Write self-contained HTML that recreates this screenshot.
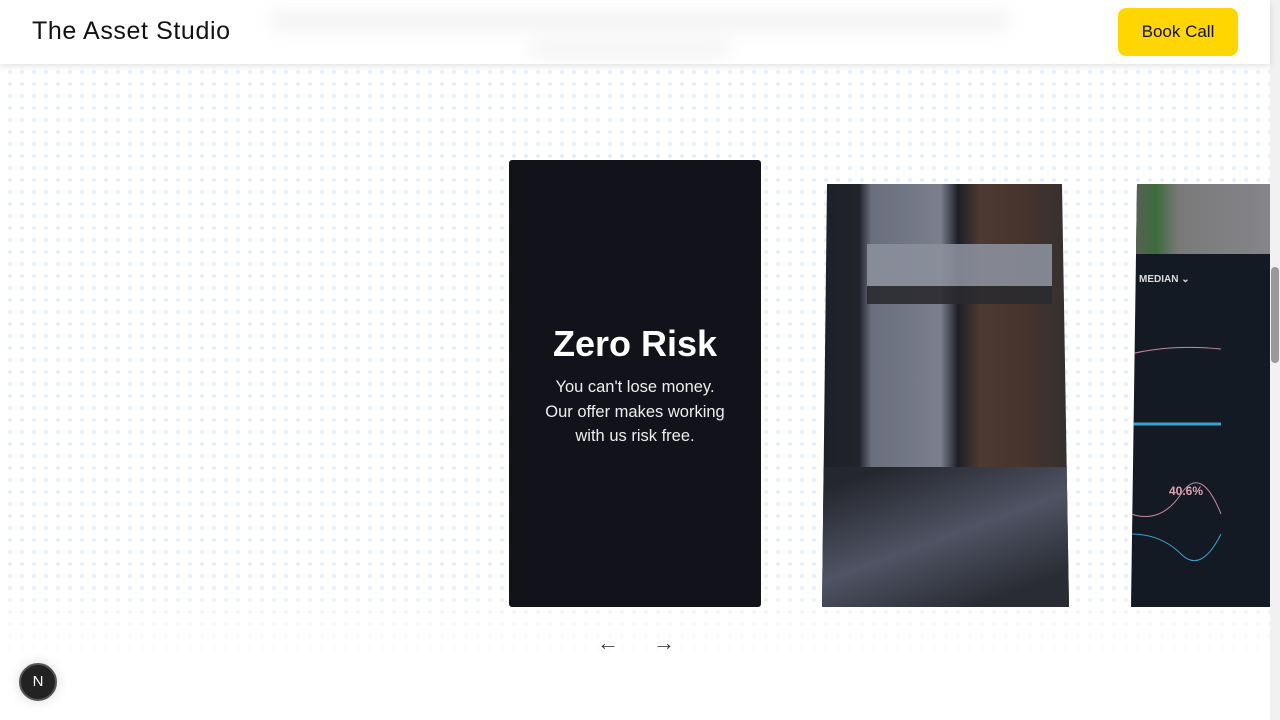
<!DOCTYPE html>
<html><head><meta charset="utf-8"><style>
*{margin:0;padding:0;box-sizing:border-box}
body{width:1280px;height:720px;overflow:hidden;background:#fff;font-family:"Liberation Sans",sans-serif;position:relative}
.dots{position:absolute;left:0;top:64px;width:1270px;height:600px;background-image:radial-gradient(circle,rgba(200,218,245,.45) 1.8px,transparent 2.4px);background-size:12px 12px;background-position:4px 2px;-webkit-mask-image:linear-gradient(#000 85%,transparent);mask-image:linear-gradient(#000 85%,transparent)}
.nav{position:absolute;left:0;top:0;width:1270px;height:64px;background:#fff;box-shadow:0 2px 6px rgba(0,0,0,.12);z-index:5}
.logo{position:absolute;left:32px;top:17px;font-size:25px;color:#111;letter-spacing:.6px}
.btn{position:absolute;left:1118px;top:8px;width:120px;height:48px;background:#ffd600;border-radius:8px;font-size:17px;color:#111;text-align:center;line-height:48px}
.blur{position:absolute;background:#ddd;filter:blur(8px);opacity:.3;border-radius:6px}
.card1{position:absolute;left:509px;top:160px;width:252px;height:447px;background:#11121a;border-radius:3px;color:#fff;text-align:center}
.card1 h2{margin-top:163px;font-size:36px;font-weight:bold}
.card1 p{margin-top:10px;font-size:16.5px;line-height:24.5px;color:#eee}
.c2{position:absolute;left:822px;top:184px;width:247px;height:423px;clip-path:polygon(5px 0,240px 0,247px 423px,0 423px);background:linear-gradient(90deg,#1e2028 0,#22242c 15%,#6a6f7e 20%,#7a7f8e 48%,#1e1f26 55%,#4d3a32 64%,#46342d 82%,#33302f 100%)}
.c2 .low{position:absolute;left:0;bottom:0;width:100%;height:140px;background:linear-gradient(160deg,#25272f 10%,#4f5464 50%,#2a2c34 85%)}
.c2 .lamp{position:absolute;left:45px;top:60px;width:185px;height:60px;background:linear-gradient(#8a8f9c 70%,#2a2a2e 70%);opacity:.9}
.c3{position:absolute;left:1131px;top:184px;width:139px;height:423px;clip-path:polygon(6px 0,139px 0,139px 423px,0 423px);background:#141a24}
.c3 .top{position:absolute;left:0;top:0;width:100%;height:70px;background:linear-gradient(90deg,#5b5f58,#3d6b3d 18%,#7a7a7a 35%,#85858a)}
.arrow{position:absolute;top:630px;font-size:22px;color:#444}
.nbadge{position:absolute;left:19px;top:663px;width:38px;height:38px;border-radius:50%;background:#222;border:2px solid #555;color:#fff;font-size:15px;text-align:center;line-height:34px;box-shadow:0 0 12px rgba(0,0,0,.15)}
.sb{position:absolute;left:1270px;top:0;width:10px;height:720px;background:#f1f1f1}
.thumb{position:absolute;left:1271px;top:267px;width:8px;height:96px;background:#999;border-radius:4px}
</style></head><body>
<div class="dots"></div>
<div class="nav">
<div class="blur" style="left:270px;top:10px;width:740px;height:22px"></div>
<div class="blur" style="left:530px;top:40px;width:200px;height:18px"></div>
<div class="logo">The Asset Studio</div>
<div class="btn">Book Call</div>
</div>
<div class="card1"><h2>Zero Risk</h2><p>You can't lose money.<br>Our offer makes working<br>with us risk free.</p></div>
<div class="c2"><div class="lamp"></div><div class="low"></div></div>
<div class="c3"><div class="top"></div>
<div style="position:absolute;left:8px;top:90px;color:#ddd;font-size:10px;font-weight:bold">MEDIAN ⌄</div>
<div style="position:absolute;left:38px;top:300px;color:#e0a0b8;font-size:12px;font-weight:bold">40.6%</div>
<svg style="position:absolute;left:0;top:150px" width="139" height="260"><path d="M0 20 Q40 10 90 15" stroke="#c48a9a" fill="none"/><path d="M0 90 H90" stroke="#3ba0d0" stroke-width="3"/><path d="M0 200 Q30 200 50 220 T90 200" stroke="#3ba0d0" fill="none"/><path d="M0 180 Q30 190 50 160 T90 180" stroke="#c48a9a" fill="none"/></svg>
</div>
<div class="arrow" style="left:597px">←</div>
<div class="arrow" style="left:653px">→</div>
<div class="nbadge">N</div>
<div class="sb"></div><div class="thumb"></div>
</body></html>
